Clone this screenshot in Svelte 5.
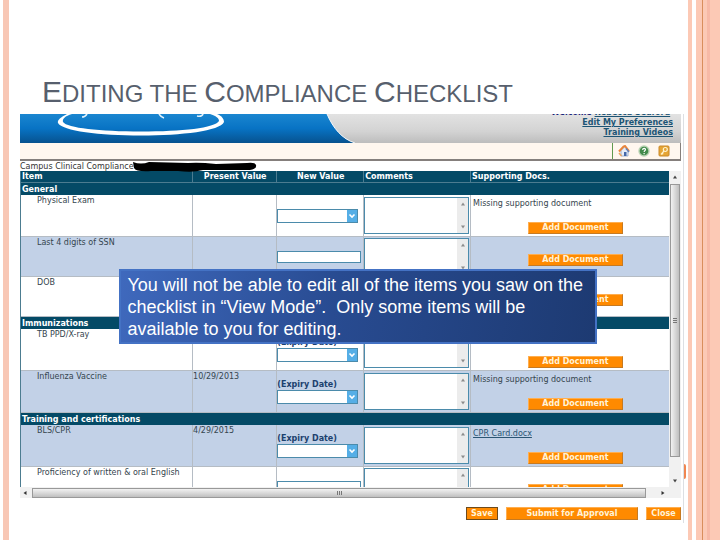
<script lang="ts">
    type Row = {
        name: string
        present?: string
        field: 'date' | 'text'
        expiry?: boolean
        doc?: string
        link?: boolean
        shaded?: boolean
    }

    const missing = 'Missing supporting document'

    const sections: { title: string, rows: Row[] }[] = [
        {
            title: 'General',
            rows: [
                { name: 'Physical Exam', field: 'date', doc: missing },
                { name: 'Last 4 digits of SSN', field: 'text', shaded: true },
                { name: 'DOB', field: 'text' },
            ],
        },
        {
            title: 'Immunizations',
            rows: [
                { name: 'TB PPD/X-ray', field: 'date', expiry: true, doc: missing },
                { name: 'Influenza Vaccine', present: '10/29/2013', field: 'date', expiry: true, doc: missing, shaded: true },
            ],
        },
        {
            title: 'Training and certifications',
            rows: [
                { name: 'BLS/CPR', present: '4/29/2015', field: 'date', expiry: true, doc: 'CPR Card.docx', link: true, shaded: true },
                { name: 'Proficiency of written & oral English', field: 'text' },
            ],
        },
    ]
</script>

<div class="slide">
    <div class="edge-left"></div>

    <main class="content">
        <h1><span>E</span>diting the <span>C</span>ompliance <span>C</span>hecklist</h1>

        <section class="app">
            <!-- Banner -->
            <header class="banner">
                <svg class="logo" width="336" height="29" viewBox="0 0 336 29" aria-hidden="true">
                    <defs>
                        <linearGradient id="blue" x1="0" y1="0" x2="0" y2="1">
                            <stop offset="0" stop-color="#1a86d0" />
                            <stop offset="0.5" stop-color="#0873c4" />
                            <stop offset="1" stop-color="#07528f" />
                        </linearGradient>
                    </defs>
                    <path d="M0 0H307C313 14 322 25 335 29H0Z" fill="url(#blue)" />
                    <path d="M307 0C313 14 322 25 335 29" fill="none" stroke="#f4f8fb" stroke-width="1" />
                    <path fill="#fff" fill-rule="evenodd" d="M47 0C41 3 37 6 38 9C42 17 80 21.500 121 21.500S200 17 204 8C204 5 202 2 197 0H190C196 2 199 4 199 7C195 14 162 17.500 121 17.500S47 14 43 8C42 5 45 2 52 0Z" />
                    <path d="M67 0Q65 3 62 3M139 0Q141 3 144 4M183 0Q182 3 177 2" fill="none" stroke="#e4f2fb" stroke-width="1.600" />
                </svg>
                <div class="account">
                    <span>Welcome <a href="#profile">Rebecca Seaford</a>&nbsp;</span>
                    <a href="#preferences">Edit My Preferences</a>
                    <a href="#videos">Training Videos</a>
                </div>
            </header>

            <nav class="toolbar">
                <a href="#home" aria-label="Home">
                    <svg width="12" height="12" viewBox="0 0 12 12">
                        <path d="M3 5.500V11H10V5L6.500 2Z" fill="#e7edf7" stroke="#8ba3cc" stroke-width="0.800" />
                        <path d="M1 6.500L5.500 1.500L7 1L11 6" fill="none" stroke="#e8843a" stroke-width="2" />
                        <path d="M8 3.500L11 7" stroke="#5f82bd" stroke-width="1.500" />
                        <rect x="6" y="7" width="2.500" height="4" fill="#4468a8" />
                        <path d="M1 8L3.500 11" stroke="#e9a560" stroke-width="1.500" />
                    </svg>
                </a>
                <a href="#help" aria-label="Help">
                    <svg width="12" height="12" viewBox="0 0 12 12">
                        <circle cx="6" cy="6" r="5.700" fill="#b9d3b4" />
                        <circle cx="6" cy="6" r="4.300" fill="#438b4b" />
                        <path d="M4.500 4.800Q4.700 3.300 6.200 3.300Q7.700 3.500 7.400 4.900Q6.200 5.800 6.100 7M6.100 8V9.200" fill="none" stroke="#fff" stroke-width="1.200" />
                    </svg>
                </a>
                <a href="#login" aria-label="Login">
                    <svg width="12" height="12" viewBox="0 0 12 12">
                        <rect x="1" y="1" width="10" height="10" rx="1" fill="#e6a534" stroke="#c9892b" />
                        <circle cx="7.300" cy="4.500" r="2" fill="none" stroke="#fff3cf" stroke-width="1.200" />
                        <path d="M6 6L3 9.500M4 8.200L5.200 9.200" stroke="#fff3cf" stroke-width="1.200" />
                    </svg>
                </a>
            </nav>

            <div class="caption">
                Campus Clinical Compliance
                <svg class="redaction" width="124" height="12" viewBox="0 0 124 12" aria-hidden="true">
                    <path d="M0 1Q8 4 16 1L55 2Q66 1 83 3L114 2Q122 1 123 4Q124 8 117 9L70 9Q60 12 45 10L18 10Q3 11 1 7Z" fill="#000" />
                </svg>
            </div>

            <!-- Checklist -->
            <div class="viewport">
                <div class="scroller">
                    <table>
                        <thead>
                            <tr>
                                <th class="c-item">Item</th>
                                <th class="c-present mid">Present Value</th>
                                <th class="c-new mid">New Value</th>
                                <th class="c-comments">Comments</th>
                                <th>Supporting Docs.</th>
                            </tr>
                        </thead>
                        <tbody>
                            {#each sections as section, s}
                                <tr class="group"><th colspan="5">{section.title}</th></tr>
                                {#each section.rows as row, r}
                                    <tr class="row {row.field}" class:shaded={row.shaded}>
                                        <td class="name">{row.name}</td>
                                        <td class="present">{row.present ?? ''}</td>
                                        <td class="new">
                                            {#if row.field === 'date'}
                                                {#if row.expiry}<label for="value-{s}-{r}">(Expiry Date)</label>{/if}
                                                <div class="pick">
                                                    <select id="value-{s}-{r}" aria-label={row.name}><option></option></select>
                                                    <svg width="10" height="12" viewBox="0 0 10 12">
                                                        <rect width="10" height="12" fill="#55aee6" />
                                                        <path d="M2.500 4.500L5 7L7.500 4.500" fill="none" stroke="#fff" stroke-width="1.600" />
                                                    </svg>
                                                </div>
                                            {:else}
                                                <input type="text" aria-label={row.name} />
                                            {/if}
                                        </td>
                                        <td class="comments">
                                            <div class="memo">
                                                <textarea aria-label="Comments for {row.name}"></textarea>
                                                <div class="memo-bar">
                                                    <svg width="6" height="4" viewBox="0 0 6 4"><path d="M1 3.500H5L3 0.500Z" fill="#8c8c8c" /></svg>
                                                    <svg width="6" height="4" viewBox="0 0 6 4"><path d="M1 0.500H5L3 3.500Z" fill="#8c8c8c" /></svg>
                                                </div>
                                            </div>
                                        </td>
                                        <td class="docs">
                                            {#if row.link}
                                                <a href="#card">{row.doc}</a>
                                            {:else if row.doc}
                                                <p>{row.doc}</p>
                                            {/if}
                                            <button class="add">Add Document</button>
                                        </td>
                                    </tr>
                                {/each}
                            {/each}
                        </tbody>
                    </table>
                </div>
                <div class="vbar">
                    <svg width="6" height="4" viewBox="0 0 6 4"><path d="M1 3.500H5L3 0.500Z" fill="#444" /></svg>
                    <div class="thumb"><i></i></div>
                    <svg width="6" height="4" viewBox="0 0 6 4"><path d="M1 0.500H5L3 3.500Z" fill="#444" /></svg>
                </div>
            </div>
            <div class="hbar">
                <svg width="4" height="6" viewBox="0 0 4 6"><path d="M3.500 1V5L0.500 3Z" fill="#333" /></svg>
                <div class="thumb"><i></i></div>
                <svg width="4" height="6" viewBox="0 0 4 6"><path d="M0.500 1V5L3.500 3Z" fill="#333" /></svg>
            </div>

            <div class="actions">
                <button class="save">Save</button>
                <button class="submit">Submit for Approval</button>
                <button class="close">Close</button>
            </div>

            <aside class="callout">
                You will not be able to edit all of the items you saw on the checklist in “View Mode”.&nbsp; Only some items will be available to you for editing.
            </aside>
            <div class="page-dot"></div>
        </section>
    </main>

    <div class="edge-right"></div>
</div>

<style>
    :global(body) { margin: 0; background: #fff; }

    .slide {
        display: flex;
        min-height: 100vh;
        overflow: hidden;
        font-family: "DejaVu Sans", Verdana, sans-serif;
        font-size: 8px;
        line-height: 10px;
        color: #35454e;
    }
    .edge-left {
        width: 6px;
        margin: 0 11px 0 3px;
        background: #f8c7b5;
    }
    .edge-right {
        width: 32px;
        margin-left: 4px;
        background: linear-gradient(to right,
            #fcc9b5 4px, #fff 4px 8px, #fcc9b5 8px 14px, #d98e5c 14px 15px,
            #fcc9b5 15px 19px, #f7b9a6 19px 22px, #fcc9b5 22px);
    }
    .content {
        flex: 1;
        min-width: 0;
        padding-top: 74px;
    }

    h1 {
        margin: 0 0 2px 22px;
        font-family: "Liberation Sans", Arial, sans-serif;
        font-size: 24px;
        font-weight: 400;
        line-height: 36px;
        text-transform: uppercase;
        color: #575f6d;
        white-space: nowrap;
    }
    h1 span { font-size: 30px; }

    button, input, select, textarea {
        box-sizing: border-box;
        margin: 0;
        padding: 0;
        font: inherit;
        border-radius: 0;
    }
    svg { display: block; }

    .app {
        position: relative;
        padding-right: 2px;
        border-right: 1px solid #dcdfe3;
    }

    /* Banner */
    .banner {
        display: flex;
        justify-content: space-between;
        align-items: flex-end;
        height: 29px;
        overflow: hidden;
        background: linear-gradient(#e2e2e2, #d3d3d3 60%, #bdbdbd);
    }
    .logo { flex: none; }
    .account {
        display: flex;
        flex-direction: column;
        align-items: flex-end;
        padding: 0 8px 5px 0;
        font-weight: 700;
        color: #1a237a;
    }
    .account a { color: #1d5575; }

    .toolbar {
        display: flex;
        justify-content: flex-end;
        align-items: center;
        gap: 8px;
        height: 16px;
        padding-right: 10px;
        background: #fff7ef;
        border: solid #857f7c;
        border-width: 0 1px 2px 0;
    }
    .toolbar a:first-child {
        padding: 2px 0 2px 5px;
        border-left: 1px solid #5f9a4f;
    }

    .caption {
        position: relative;
        height: 10px;
        line-height: 12px;
        color: #333;
    }
    .redaction {
        position: absolute;
        top: 0;
        left: 113px;
        z-index: 1;
    }

    /* Checklist */
    .viewport {
        display: flex;
        height: 316px;
    }
    .scroller {
        flex: 1;
        min-width: 0;
        overflow: hidden;
    }
    table {
        width: 100%;
        table-layout: fixed;
        border-collapse: separate;
        border-spacing: 0;
        border-left: 1px solid #4c7c90;
    }
    th, td {
        box-sizing: border-box;
        padding: 0;
        text-align: left;
    }
    th {
        height: 12px;
        padding: 1px 0 0 1px;
        background: #044a66;
        color: #fff;
        white-space: nowrap;
    }
    thead th { border-bottom: 1px solid #4c7c90; }
    thead th + th { border-left: 1px solid #4c7c90; }
    .mid { text-align: center; }
    .c-item { width: 26.400%; }
    .c-present { width: 13%; }
    .c-new { width: 13.400%; }
    .c-comments { width: 16.500%; }

    .row td {
        height: 42px;
        border-bottom: 1px solid #b5bcc4;
        background: #fff;
    }
    .row.text td { height: 40px; }
    .row.shaded td { background: #c2d1e7; }
    .row td + td { border-left: 1px solid #b5bcc4; }
    .row .name, .row .present {
        padding: 1px 0 0;
        vertical-align: top;
    }
    .row .name { padding-left: 16px; white-space: nowrap; }

    .new label {
        display: block;
        font-weight: 700;
        color: #1c416e;
    }
    .new input {
        display: block;
        width: 98%;
        height: 12px;
        border: 1px solid #4b8bab;
        background: #fff;
    }
    .pick {
        display: flex;
        align-items: center;
        width: 94%;
        height: 14px;
        box-sizing: border-box;
        border: 1px solid #4b8bab;
        background: #fff;
    }
    .pick select {
        flex: 1;
        min-width: 0;
        height: 12px;
        border: 0;
        appearance: none;
        background: transparent;
    }

    .memo {
        display: flex;
        height: 37px;
        box-sizing: border-box;
        margin-right: 1px;
        border: 1px solid #4b8bab;
    }
    .memo textarea {
        flex: 1;
        min-width: 0;
        border: 0;
        resize: none;
        overflow: hidden;
        background: #fff;
    }
    .memo-bar {
        display: flex;
        flex-direction: column;
        justify-content: space-between;
        align-items: center;
        width: 11px;
        padding: 4px 0;
        background: #ececec;
    }

    .row .docs {
        padding: 4px 0 0 2px;
        vertical-align: top;
        white-space: nowrap;
    }
    .docs p { margin: 0; }
    .docs a { display: block; color: #2b5674; }
    .add, .actions button {
        border: 1px solid;
        border-color: #ffae4f #c67a22 #c67a22 #ffae4f;
        background: #ff8a00;
        color: #fff3d8;
        font-weight: 700;
        line-height: 10px;
    }
    .add {
        display: block;
        width: 95px;
        height: 12px;
        margin: 13px 0 0 28%;
    }

    /* Scrollbars */
    .vbar {
        display: flex;
        flex-direction: column;
        align-items: center;
        justify-content: space-between;
        width: 12px;
        box-sizing: border-box;
        padding: 4px 0;
        background: #f1f1f1;
    }
    .thumb {
        display: flex;
        align-items: center;
        justify-content: center;
        box-sizing: border-box;
        border: 1px solid #999;
    }
    .vbar .thumb {
        width: 10px;
        flex: 1;
        margin: 5px 0 22px;
        background: linear-gradient(to right, #f2f2f2, #d9d9d9 50%, #bfbfbf);
    }
    .vbar i {
        width: 4px;
        height: 5px;
        background: repeating-linear-gradient(#777 0 1px, transparent 1px 2px);
    }
    .hbar {
        display: flex;
        align-items: center;
        height: 11px;
        padding: 0 16px 0 3px;
        background: #f1f1f1;
    }
    .hbar .thumb {
        flex: 1;
        height: 10px;
        margin: 0 15px 0 5px;
        background: linear-gradient(#f2f2f2, #d9d9d9 50%, #bfbfbf);
    }
    .hbar i {
        width: 5px;
        height: 4px;
        background: repeating-linear-gradient(to right, #777 0 1px, transparent 1px 2px);
    }

    .actions {
        display: flex;
        justify-content: flex-end;
        gap: 8px;
        padding: 9px 0 3px;
    }
    .actions button { height: 13px; }
    .actions .save { width: 32px; border-color: #6d4a1c; }
    .actions .submit { width: 132px; }
    .actions .close { width: 35px; }

    /* Note laid over the checklist */
    .callout {
        position: absolute;
        top: 155px;
        left: 15%;
        width: 72%;
        height: 75px;
        box-sizing: border-box;
        padding: 3px 4px 0 6px;
        border: 2px solid #4472c4;
        background: linear-gradient(100deg, #3f69bd, #284b91 45%, #1d3a72);
        font-family: "Liberation Sans", Arial, sans-serif;
        font-size: 18px;
        line-height: 22px;
        color: #fff;
    }
    .page-dot {
        position: absolute;
        top: 350px;
        right: -3px;
        width: 2px;
        height: 15px;
        border-radius: 0 2px 2px 0;
        background: #f08650;
    }
</style>
